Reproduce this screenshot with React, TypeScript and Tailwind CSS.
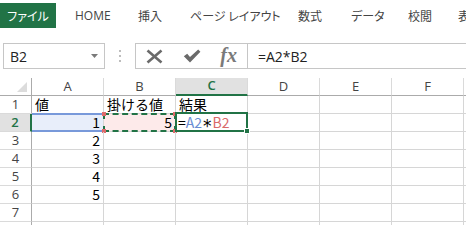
import React from 'react';

const COLS = ['A', 'B', 'C', 'D', 'E', 'F', 'G'];

type CellVal = { t: string; align: 'l' | 'r' } | null;

const DATA: Record<number, CellVal[]> = {
  1: [{ t: '値', align: 'l' }, { t: '掛ける値', align: 'l' }, { t: '結果', align: 'l' }],
  2: [{ t: '1', align: 'r' }, { t: '5', align: 'r' }, null],
  3: [{ t: '2', align: 'r' }],
  4: [{ t: '3', align: 'r' }],
  5: [{ t: '4', align: 'r' }],
  6: [{ t: '5', align: 'r' }],
};

function TabBar() {
  const tabs: { label: string; w: string }[] = [
    { label: 'HOME', w: 'w-[63px]' },
    { label: '挿入', w: 'w-[52px]' },
    { label: 'ページ レイアウト', w: 'w-[108px]' },
    { label: '数式', w: 'w-[53px]' },
    { label: 'データ', w: 'w-[57px]' },
    { label: '校閲', w: 'w-[50px]' },
    { label: '表示', w: 'w-[50px]' },
  ];
  return (
    <div className="flex h-[31px] pt-[3px] items-start font-['Noto_Sans_CJK_JP','Open_Sans',sans-serif] [font-feature-settings:'palt'] text-[12px]">
      <div className="w-[56px] h-[25px] shrink-0 bg-[#217346] text-white flex items-center justify-center">ファイル</div>
      <div className="flex ml-[19px] h-[25px] items-center text-[#444]">
        {tabs.map((t) => (
          <div key={t.label} className={`${t.w} shrink-0 whitespace-nowrap`}>
            {t.label === 'HOME' ? <span className="font-['Open_Sans',sans-serif]">HOME</span> : t.label}
          </div>
        ))}
      </div>
    </div>
  );
}

function FormulaBar() {
  return (
    <div className="flex mt-[12px] h-[26px] items-stretch">
      <div className="ml-[3px] w-[102px] shrink-0 border border-[#c6c6c6] flex items-center justify-between pl-[6px] pr-[6px]">
        <span className="font-['Open_Sans',sans-serif] text-[14px] text-[#222]">B2</span>
        <svg width="7" height="4" viewBox="0 0 7 4">
          <polygon points="0,0 7,0 3.5,4" fill="#7a7a7a" />
        </svg>
      </div>
      <div className="w-[30px] shrink-0 flex flex-col items-center justify-center gap-[3px]">
        <div className="w-[2px] h-[2px] bg-[#bdbdbd]" />
        <div className="w-[2px] h-[2px] bg-[#bdbdbd]" />
        <div className="w-[2px] h-[2px] bg-[#bdbdbd]" />
      </div>
      <div className="flex-1 border border-[#c6c6c6] flex min-w-[340px]">
        <div className="w-[112px] shrink-0 border-r border-[#c6c6c6] flex items-center">
          <div className="w-[37px] flex justify-center">
            <svg width="17" height="15" viewBox="0 0 17 15">
              <line x1="1.5" y1="1.5" x2="15.5" y2="13.5" stroke="#6a6a6a" strokeWidth="2.6" />
              <line x1="15.5" y1="1.5" x2="1.5" y2="13.5" stroke="#6a6a6a" strokeWidth="2.6" />
            </svg>
          </div>
          <div className="w-[38px] flex justify-center">
            <svg width="18" height="14" viewBox="0 0 18 14">
              <path d="M0.8 7.2 L4.2 4.8 L7 8 L15.2 0.5 L17.4 2.8 L7 13.4 Z" fill="#6a6a6a" />
            </svg>
          </div>
          <div className="w-[37px] flex justify-center">
            <span className="font-['Liberation_Serif',serif] italic font-bold text-[20px] leading-none text-[#7a7a7a] -mt-[2px]">fx</span>
          </div>
        </div>
        <div className="flex items-center pl-[10px] font-['Open_Sans',sans-serif] text-[14px] text-[#222]">=A2*B2</div>
      </div>
    </div>
  );
}

function Sheet() {
  const rows = [1, 2, 3, 4, 5, 6, 7, 8];
  return (
    <div className="mt-[9px] grid grid-cols-[32px_72px_72px_72px_72px_72px_72px_72px] w-[536px] font-['Noto_Sans_CJK_JP',sans-serif]">
      <div className="h-[18px] border-r border-b border-r-[#ababab] border-b-[#ababab] flex items-end justify-end pr-[4px] pb-[3px]">
        <svg width="10" height="10" viewBox="0 0 10 10">
          <polygon points="10,0 10,10 0,10" fill="#dcdcdc" />
        </svg>
      </div>
      {COLS.map((c) =>
        c === 'C' ? (
          <div key={c} className="h-[18px] border-r border-r-[#dadada] border-b-2 border-b-[#217346] bg-[#e1e1e1] flex items-center justify-center font-['Open_Sans',sans-serif] text-[13px] text-[#217346] font-semibold">
            {c}
          </div>
        ) : (
          <div key={c} className="h-[18px] border-r border-r-[#dadada] border-b border-b-[#ababab] flex items-center justify-center font-['Open_Sans',sans-serif] text-[13px] text-[#444]">
            {c}
          </div>
        )
      )}
      {rows.map((r) => (
        <React.Fragment key={r}>
          {r === 2 ? (
            <div className="h-[18px] border-r-2 border-r-[#217346] border-b border-b-[#dadada] bg-[#e1e1e1] flex items-center justify-center font-['Open_Sans',sans-serif] text-[13px] text-[#217346] font-semibold">
              {r}
            </div>
          ) : (
            <div className="h-[18px] border-r border-r-[#ababab] border-b border-b-[#dadada] flex items-center justify-center font-['Open_Sans',sans-serif] text-[13px] text-[#444]">
              {r}
            </div>
          )}
          {COLS.map((c, ci) => {
            const v = DATA[r]?.[ci] ?? null;
            const isA2 = r === 2 && c === 'A';
            const isB2 = r === 2 && c === 'B';
            const isC2 = r === 2 && c === 'C';
            const bg = isA2 ? 'bg-[#e8eefa]' : isB2 ? 'bg-[#fdeaea]' : '';
            return (
              <div
                key={c}
                className={`relative h-[18px] border-r border-b border-[#d6d6d6] ${bg} flex items-end ${
                  v && v.align === 'r' ? 'justify-end pr-[3px]' : 'justify-start pl-[3px]'
                }`}
              >
                {v && <span className="text-[14px] leading-[17px] text-black whitespace-nowrap">{v.t}</span>}
                {isC2 && (
                  <span className="text-[14px] leading-[17px] text-black whitespace-nowrap -ml-[1px] flex items-end">
                    <span>=</span>
                    <span className="text-[#6b8dd3]">A2</span>
                    <span className="font-['DejaVu_Sans',sans-serif] text-[17px] leading-[17px] translate-y-[4px] mx-[1px]">*</span>
                    <span className="text-[#d96a6a]">B2</span>
                  </span>
                )}
                {isA2 && <div className="absolute -top-px left-0 right-0 -bottom-px border-y-2 border-[#7899da]" />}
                {isB2 && (
                  <>
                    <div className="absolute -top-px -left-px -right-px -bottom-px border-2 border-dashed border-[#217346]" />
                    <div className="absolute -top-[2px] -left-[2px] w-[4px] h-[4px] bg-[#e06b6b]" />
                    <div className="absolute -top-[2px] -right-[2px] w-[4px] h-[4px] bg-[#e06b6b]" />
                    <div className="absolute -bottom-[2px] -left-[2px] w-[4px] h-[4px] bg-[#e06b6b]" />
                    <div className="absolute -bottom-[2px] -right-[2px] w-[4px] h-[4px] bg-[#e06b6b]" />
                  </>
                )}
                {isC2 && (
                  <>
                    <div className="absolute -top-[2px] -left-[1px] -right-px -bottom-px border-2 border-[#217346] z-10" />
                    <div className="absolute -right-[3px] -bottom-[3px] w-[6px] h-[6px] bg-[#217346] border border-white z-20" />
                  </>
                )}
              </div>
            );
          })}
        </React.Fragment>
      ))}
    </div>
  );
}

export default function App() {
  return (
    <div className="w-[466px] h-[225px] overflow-hidden bg-white">
      <TabBar />
      <FormulaBar />
      <Sheet />
    </div>
  );
}
